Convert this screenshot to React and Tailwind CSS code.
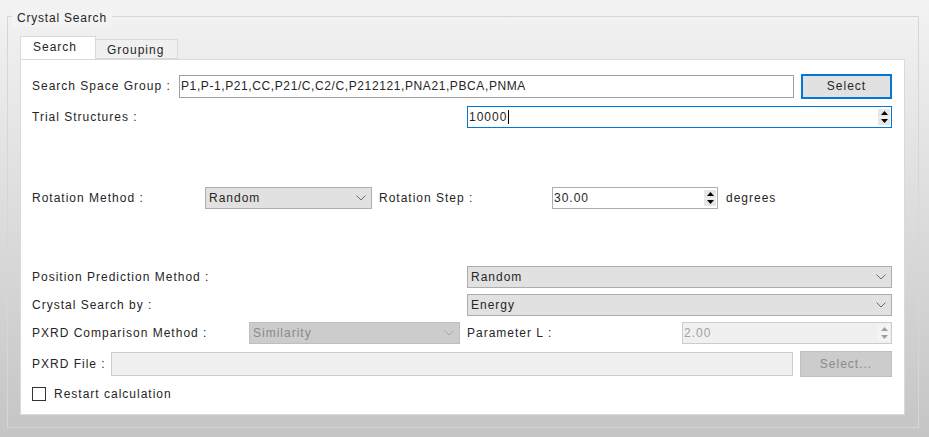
const font = { fontFamily: '"Liberation Sans", Arial, sans-serif' };

const Chevron = ({ color = '#6d6d6d' }) => (
  <svg width="10" height="6" viewBox="0 0 10 6" className="shrink-0">
    <path d="M0.5 0.5 L5 5 L9.5 0.5" fill="none" stroke={color} strokeWidth="1" />
  </svg>
);

const Combo = ({ value, className = '', disabled }) => (
  <div
    className={`flex items-center justify-between h-[22px] pl-[3px] pr-[5px] border ${
      disabled ? 'bg-[#cccccc] border-[#bfbfbf] text-[#8a8a8a]' : 'bg-[#e1e1e1] border-[#adadad]'
    } ${className}`}
  >
    <span>{value}</span>
    <Chevron color={disabled ? '#a8a8a8' : '#6d6d6d'} />
  </div>
);

const Arrows = ({ disabled }) => (
  <div className={`flex flex-col w-[12px] h-[16px] mr-[1px] ${disabled ? 'bg-[#f4f4f4]' : 'bg-[#e6e6e6]'}`}>
    <div className="flex-1 flex items-center justify-center border-b border-[#f8f8f8]">
      <svg width="7" height="4" viewBox="0 0 7 4"><path d="M0 4 L3.5 0 L7 4Z" fill={disabled ? '#a0a0a0' : '#000'} /></svg>
    </div>
    <div className="flex-1 flex items-center justify-center">
      <svg width="7" height="4" viewBox="0 0 7 4"><path d="M0 0 L3.5 4 L7 0Z" fill={disabled ? '#a0a0a0' : '#000'} /></svg>
    </div>
  </div>
);

const Spin = ({ value, className = '', focused, disabled, caret }) => (
  <div
    className={`flex items-center justify-between h-[22px] pl-[1px] border ${
      focused ? 'border-[#0078d7] bg-white' : disabled ? 'border-[#cccccc] bg-[#f0f0f0] text-[#a0a0a0]' : 'border-[#adadad] bg-white'
    } ${className}`}
  >
    <span className="flex items-center">
      {value}
      {caret && <span className="inline-block w-[1px] h-[14px] bg-black ml-[1px]" />}
    </span>
    <Arrows disabled={disabled} />
  </div>
);

const Label = ({ children, className = '' }) => <div className={`shrink-0 ${className}`}>{children}</div>;

export default function App() {
  return (
    <div
      className="w-[929px] h-[437px] bg-gradient-to-b from-[#f3f3f3] to-[#c5c5c5] pt-[16px] pl-[7px] text-[12px] tracking-[1px] text-[#262626] overflow-hidden"
      style={font}
    >
      <div className="relative w-[912px] h-[412px] border border-[#d6d6d6] pt-[20px] pl-[12px]">
        <div className="absolute left-[4px] -top-[7px] px-[5px] h-[17px] leading-[17px] bg-[#f3f3f3] tracking-[0.8px]">
          Crystal Search
        </div>

        <div className="flex items-end h-[22px]">
          <div className="w-[76px] h-[23px] bg-white border border-b-0 border-[#d9d9d9] pl-[12px] leading-[21px] relative z-10">
            Search
          </div>
          <div className="w-[82px] h-[20px] bg-[#f0f0f0] border border-l-0 border-[#d9d9d9] pl-[11px] leading-[20px]">
            Grouping
          </div>
        </div>

        <div className="w-[885px] h-[356px] bg-white border border-[#d9d9d9] px-[11px] flex flex-col">
          {/* Row 1 */}
          <div className="flex items-center h-[24px] mt-[14px]">
            <Label className="w-[147px]">Search Space Group :</Label>
            <div className="w-[615px] h-[23px] border border-[#a0a0a0] bg-white pl-[1px] leading-[21px] tracking-[0.6px]">
              P1,P-1,P21,CC,P21/C,C2/C,P212121,PNA21,PBCA,PNMA
            </div>
            <div className="ml-[7px] w-[91px] h-[25px] border-2 border-[#0078d7] bg-[#e1e1e1] flex items-center justify-center">
              Select
            </div>
          </div>

          {/* Row 2 */}
          <div className="flex items-center h-[22px] mt-[8px]">
            <Label className="w-[435px]">Trial Structures :</Label>
            <Spin value="10000" focused caret className="w-[425px]" />
          </div>

          {/* Row 3 */}
          <div className="flex items-center h-[22px] mt-[59px]">
            <Label className="w-[173px]">Rotation Method :</Label>
            <Combo value="Random" className="w-[167px]" />
            <Label className="w-[173px] ml-[7px]">Rotation Step :</Label>
            <Spin value="30.00" className="w-[166px]" />
            <Label className="ml-[8px]">degrees</Label>
          </div>

          {/* Row 4 */}
          <div className="flex items-center h-[22px] mt-[57px]">
            <Label className="w-[435px]">Position Prediction Method :</Label>
            <Combo value="Random" className="w-[425px]" />
          </div>

          {/* Row 5 */}
          <div className="flex items-center h-[22px] mt-[6px]">
            <Label className="w-[435px]">Crystal Search by :</Label>
            <Combo value="Energy" className="w-[425px]" />
          </div>

          {/* Row 6 */}
          <div className="flex items-center h-[22px] mt-[6px]">
            <Label className="w-[217px]">PXRD Comparison Method :</Label>
            <Combo value="Similarity" disabled className="w-[211px]" />
            <Label className="w-[215px] ml-[7px]">Parameter L :</Label>
            <Spin value="2.00" disabled className="w-[210px]" />
          </div>

          {/* Row 7 */}
          <div className="flex items-center h-[26px] mt-[7px]">
            <Label className="w-[79px]">PXRD File :</Label>
            <div className="w-[682px] h-[24px] border border-[#cccccc] bg-[#f0f0f0]" />
            <div className="ml-[7px] w-[92px] h-[26px] border border-[#bfbfbf] bg-[#cccccc] text-[#8a8a8a] flex items-center justify-center">
              Select...
            </div>
          </div>

          {/* Row 8 */}
          <div className="flex items-center h-[16px] mt-[9px]">
            <div className="w-[14px] h-[14px] border border-[#333333] bg-white" />
            <span className="ml-[8px]">Restart calculation</span>
          </div>
        </div>
      </div>
    </div>
  );
}
